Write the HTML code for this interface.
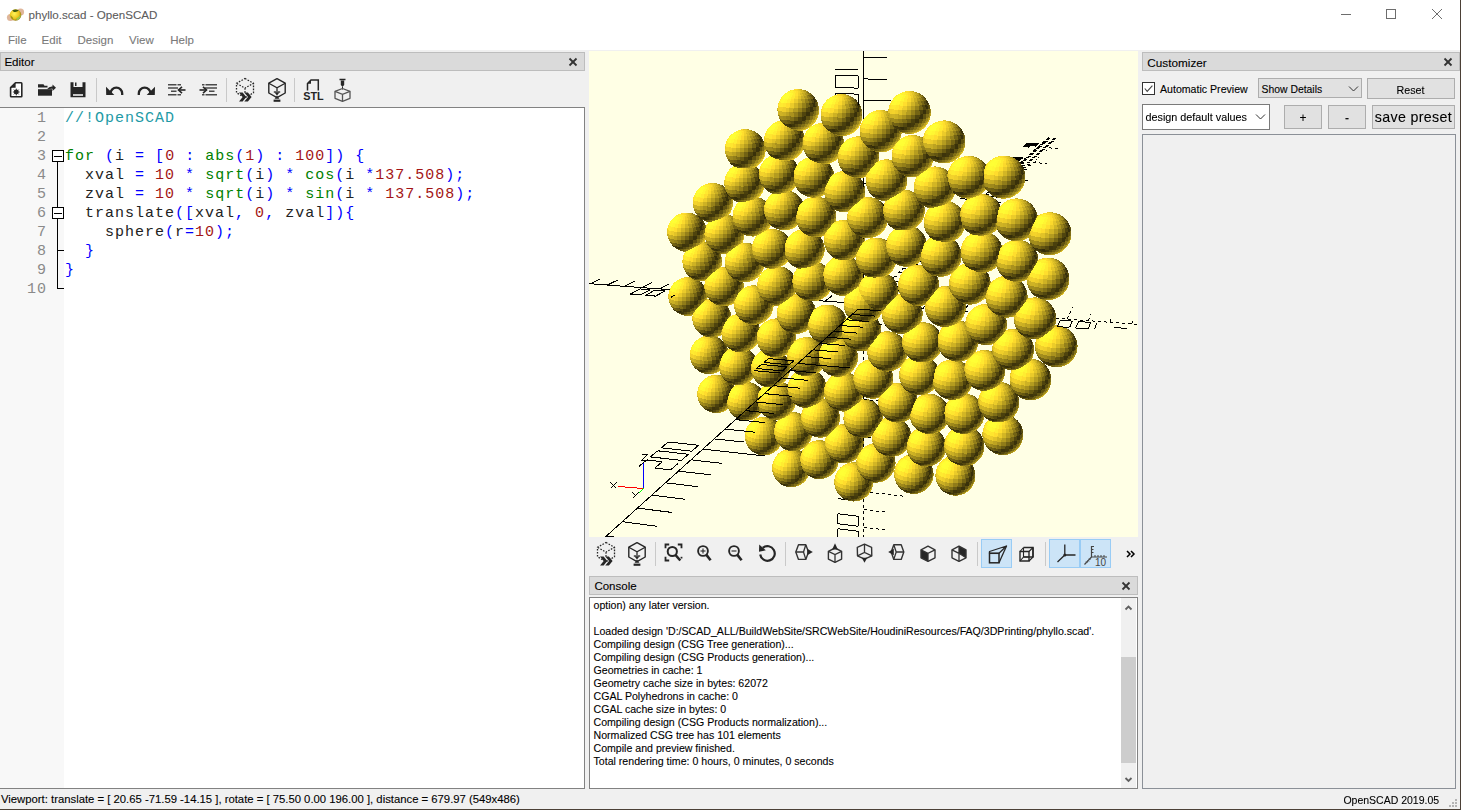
<!DOCTYPE html><html><head><meta charset="utf-8"><title>phyllo.scad - OpenSCAD</title><style>
*{margin:0;padding:0;box-sizing:border-box}
html,body{width:1461px;height:810px;overflow:hidden;background:#f0f0f0;font-family:"Liberation Sans",sans-serif}
.a{position:absolute}
.t{position:absolute;line-height:1;white-space:pre;-webkit-text-stroke:0.1px currentColor}
.m{font-family:"Liberation Mono",monospace}
svg{position:absolute;overflow:hidden}
</style></head><body>
<div class="a" style="left:0px;top:0px;width:1461px;height:50px;background:#fff;"></div>
<div class="t" style="left:28.5px;top:8.68px;font-size:11.6px;color:#5c5c5c;">phyllo.scad - OpenSCAD</div>
<svg style="left:5px;top:5px" width="22" height="20"><defs><radialGradient id="ig" cx=".4" cy=".4" r=".7"><stop offset="0" stop-color="#fff45a"/><stop offset=".6" stop-color="#e8c21a"/><stop offset="1" stop-color="#6b5a10"/></radialGradient></defs><circle cx="15.5" cy="7" r="3.6" fill="#d9a98a" opacity=".85"/><circle cx="5.5" cy="12.5" r="3.6" fill="#d9a98a" opacity=".85"/><circle cx="10.5" cy="10" r="5.8" fill="url(#ig)"/><path d="M7.2 5.6Q10.5 3.6 13.8 5.6Q11.5 7.6 9 6.9Z" fill="#3f5a12"/><path d="M12.2 15.2Q15.8 13.5 15.6 9.8Q13.6 12.8 11.2 13.6Z" fill="#9bc84a"/><path d="M5.2 10.2Q6.2 13.5 8.6 14.6L7.4 12.2Z" fill="#5e6a20" opacity=".8"/></svg>
<div class="t" style="left:8px;top:35.07px;font-size:11.5px;color:#7a7a7a;">File</div>
<div class="t" style="left:41.6px;top:35.07px;font-size:11.5px;color:#7a7a7a;">Edit</div>
<div class="t" style="left:77.5px;top:35.07px;font-size:11.5px;color:#7a7a7a;">Design</div>
<div class="t" style="left:129.1px;top:35.07px;font-size:11.5px;color:#7a7a7a;">View</div>
<div class="t" style="left:170.3px;top:35.07px;font-size:11.5px;color:#7a7a7a;">Help</div>
<svg style="left:1330px;top:0" width="131" height="30"><g stroke="#6d6d6d" stroke-width="1" fill="none"><line x1="11" y1="14.5" x2="21" y2="14.5"/><rect x="56.5" y="9.5" width="9" height="9"/><line x1="102" y1="9" x2="112" y2="19"/><line x1="112" y1="9" x2="102" y2="19"/></g></svg>
<div class="a" style="left:0px;top:52px;width:585px;height:19px;background:#dadada;border:1px solid #bdbdbd;"></div>
<div class="t" style="left:4.4px;top:56.92px;font-size:11.55px;color:#000;">Editor</div>
<svg style="left:568px;top:56.5px" width="10" height="10"><g stroke="#333" stroke-width="1.8"><line x1="1.5" y1="1.5" x2="8.5" y2="8.5"/><line x1="8.5" y1="1.5" x2="1.5" y2="8.5"/></g></svg>
<div class="a" style="left:589px;top:576px;width:549px;height:19px;background:#dadada;border:1px solid #bdbdbd;"></div>
<div class="t" style="left:594.4px;top:580.97px;font-size:11.5px;color:#000;">Console</div>
<svg style="left:1121px;top:580.5px" width="10" height="10"><g stroke="#333" stroke-width="1.8"><line x1="1.5" y1="1.5" x2="8.5" y2="8.5"/><line x1="8.5" y1="1.5" x2="1.5" y2="8.5"/></g></svg>
<div class="a" style="left:1142px;top:52px;width:318px;height:19px;background:#dadada;border:1px solid #bdbdbd;"></div>
<div class="t" style="left:1147.3px;top:56.75px;font-size:11.75px;color:#000;">Customizer</div>
<svg style="left:1443px;top:56.5px" width="10" height="10"><g stroke="#333" stroke-width="1.8"><line x1="1.5" y1="1.5" x2="8.5" y2="8.5"/><line x1="8.5" y1="1.5" x2="1.5" y2="8.5"/></g></svg>
<svg style="left:8px;top:80px" width="18" height="20" viewBox="0 0 18 20" ><path d="M7.5 2.8H13.2Q13.8 2.8 13.8 3.5V16.2Q13.8 16.8 13.2 16.8H3.2Q2.6 16.8 2.6 16.2V7.6Z" fill="#fff" stroke="#262626" stroke-width="1.6" stroke-linejoin="round"/><path d="M2.6 7.8L7.6 2.8V7.8Z" fill="#262626"/><circle cx="8.3" cy="12" r="2.4" fill="#262626"/><path d="M8.3 8.6V15.4M4.9 12H11.7M5.9 9.6L10.7 14.4M10.7 9.6L5.9 14.4" stroke="#262626" stroke-width="0.9"/></svg><svg style="left:36px;top:80px" width="22" height="18" viewBox="0 0 22 18" ><path d="M2 4.3H7.5L8.5 5.8H11.5V7.6H2Z" fill="#262626"/><path d="M2 9.2H16V15.7H2Z" fill="#262626"/><path d="M11 9.3Q13 6.3 16.5 6.6V4.5L20 7.8L16.5 11V8.8Q14 8.6 12.5 9.3Z" fill="#262626"/></svg><svg style="left:68px;top:80px" width="20" height="20" viewBox="0 0 20 20" ><path d="M2.5 2.3H5.5V7H14.5V2.3H17.5V17.3H2.5Z" fill="#262626"/><rect x="7" y="2.5" width="1.5" height="3.5" fill="#262626"/><rect x="5" y="14" width="10" height="2" fill="#c8c8c8"/></svg><div class="a" style="left:96px;top:78px;width:1px;height:24px;background:#c9c9c9"></div><div class="a" style="left:226px;top:78px;width:1px;height:24px;background:#c9c9c9"></div><div class="a" style="left:294px;top:78px;width:1px;height:24px;background:#c9c9c9"></div><svg style="left:104px;top:80px" width="22" height="18" viewBox="0 0 22 18" ><path d="M6.5 15V13.5A5.8 5.8 0 0 1 18.2 13.5V15" fill="none" stroke="#262626" stroke-width="2.3"/><path d="M2 6.8L2.2 15H10.3Z" fill="#262626"/></svg><svg style="left:135px;top:80px" width="22" height="18" viewBox="0 0 22 18" ><path d="M15.5 15V13.5A5.8 5.8 0 0 0 3.8 13.5V15" fill="none" stroke="#262626" stroke-width="2.3"/><path d="M20 6.8L19.8 15H11.7Z" fill="#262626"/></svg><svg style="left:166px;top:80px" width="22" height="18" viewBox="0 0 22 18" ><g stroke="#4a4a4a" stroke-width="1.6"><path d="M2 4.8H10.5M11.5 4.8H15M2 8H12M5 11.2H10.5M2 14.8H10.5M11.5 14.8H15"/></g><path d="M12.8 10H19.5" stroke="#262626" stroke-width="1.6"/><path d="M16 6.8L12.5 10L16 13.2" fill="none" stroke="#262626" stroke-width="1.6"/></svg><svg style="left:197px;top:80px" width="22" height="18" viewBox="0 0 22 18" ><g stroke="#4a4a4a" stroke-width="1.6"><path d="M5 4.8H7.5M8.5 4.8H20M8 8H20M12 11.2H17.5M5 14.8H7.5M8.5 14.8H20"/></g><path d="M2.5 10H9.2" stroke="#262626" stroke-width="1.6"/><path d="M6 6.8L9.5 10L6 13.2" fill="none" stroke="#262626" stroke-width="1.6"/></svg><svg style="left:233px;top:77px" width="24" height="26" viewBox="0 0 24 26" ><path d="M12 1.5L20.5 6.3V15.8L12 20.6L3.5 15.8V6.3Z" fill="none" stroke="#262626" stroke-width="1.3" stroke-dasharray="1.6 1.4"/><path d="M3.8 6.5L12 11.1L20.2 6.5M12 11.1V17" fill="none" stroke="#262626" stroke-width="1.2" stroke-dasharray="1.6 1.4"/><path d="M6 15.5H9.6L13.3 20L9.6 24.5H6L9.7 20Z M11.3 15.5H14.9L18.6 20L14.9 24.5H11.3L15 20Z" fill="#262626"/></svg><svg style="left:265px;top:77px" width="24" height="26" viewBox="0 0 24 26" ><path d="M12 1.6L20.2 6.2V16L12 20.6L3.8 16V6.2Z" fill="none" stroke="#262626" stroke-width="1.4" stroke-linejoin="round"/><path d="M3.8 6.2L12 10.8L20.2 6.2M12 10.8V14" fill="none" stroke="#262626" stroke-width="1.3"/><path d="M9.6 15.6H14.4L12 18.6Z M12 18.6L14.4 21.8H9.6Z" fill="#262626"/><rect x="8.6" y="22.6" width="6.8" height="2.2" fill="#262626"/><path d="M8.8 15H15.2" stroke="#262626" stroke-width="1.3"/></svg><svg style="left:301px;top:77px" width="24" height="24" viewBox="0 0 24 24" ><path d="M6.5 13.5V6.5L10 3H17.3V13.5" fill="none" stroke="#262626" stroke-width="1.5"/><path d="M6.5 6.8L10 3.3V6.8Z" fill="#262626"/><text x="12.5" y="22.7" font-family="Liberation Sans" font-weight="bold" font-size="10" text-anchor="middle" fill="#262626" textLength="20.5" lengthAdjust="spacingAndGlyphs">STL</text></svg><svg style="left:333px;top:77px" width="22" height="25" viewBox="0 0 22 25" ><path d="M6.5 2.5H12.5" stroke="#262626" stroke-width="1.5"/><path d="M7.8 3.5H11.2V8L9.5 9.8L7.8 8Z" fill="#262626"/><path d="M9.5 9.5V12.5" stroke="#262626" stroke-width="1"/><path d="M9.5 11.5L17 14.3V21.3L9.5 24.3L2 21.3V14.3Z" fill="none" stroke="#555" stroke-width="1.3" stroke-linejoin="round"/><path d="M2 14.3L9.5 17.3L17 14.3M9.5 17.3V24.3" fill="none" stroke="#555" stroke-width="1.3"/></svg>
<svg style="left:594px;top:541px" width="24" height="26" viewBox="0 0 24 26" ><path d="M12 1.5L20.5 6.3V15.8L12 20.6L3.5 15.8V6.3Z" fill="none" stroke="#262626" stroke-width="1.3" stroke-dasharray="1.6 1.4"/><path d="M3.8 6.5L12 11.1L20.2 6.5M12 11.1V17" fill="none" stroke="#262626" stroke-width="1.2" stroke-dasharray="1.6 1.4"/><path d="M6 15.5H9.6L13.3 20L9.6 24.5H6L9.7 20Z M11.3 15.5H14.9L18.6 20L14.9 24.5H11.3L15 20Z" fill="#262626"/></svg><svg style="left:625px;top:541px" width="24" height="26" viewBox="0 0 24 26" ><path d="M12 1.6L20.2 6.2V16L12 20.6L3.8 16V6.2Z" fill="none" stroke="#262626" stroke-width="1.4" stroke-linejoin="round"/><path d="M3.8 6.2L12 10.8L20.2 6.2M12 10.8V14" fill="none" stroke="#262626" stroke-width="1.3"/><path d="M9.6 15.6H14.4L12 18.6Z M12 18.6L14.4 21.8H9.6Z" fill="#262626"/><rect x="8.6" y="22.6" width="6.8" height="2.2" fill="#262626"/><path d="M8.8 15H15.2" stroke="#262626" stroke-width="1.3"/></svg><div class="a" style="left:655px;top:542px;width:1px;height:24px;background:#c9c9c9"></div><div class="a" style="left:785px;top:542px;width:1px;height:24px;background:#c9c9c9"></div><div class="a" style="left:977px;top:542px;width:1px;height:24px;background:#c9c9c9"></div><div class="a" style="left:1045px;top:542px;width:1px;height:24px;background:#c9c9c9"></div><svg style="left:662px;top:541px" width="24" height="24" viewBox="0 0 24 24" ><path d="M3.5 7.2V3.5H7.2M15.8 3.5H19.5V7.2M3.5 15.8V19.5H7.2" fill="none" stroke="#262626" stroke-width="1.8"/><circle cx="10.3" cy="10.5" r="4.6" fill="none" stroke="#262626" stroke-width="2"/><path d="M13.5 14L18.3 19.5" stroke="#262626" stroke-width="2.6"/><path d="M19.5 15.8V17.5" stroke="#262626" stroke-width="1.8"/></svg><svg style="left:694px;top:542px" width="20" height="22" viewBox="0 0 20 22" ><circle cx="9" cy="9" r="4.9" fill="none" stroke="#262626" stroke-width="1.9"/><path d="M12.2 12.6L16.6 18.2" stroke="#262626" stroke-width="2.6"/><path d="M6.5 9H11.5" stroke="#262626" stroke-width="1.1"/><path d="M9 6.5V11.5" stroke="#262626" stroke-width="1.1"/></svg><svg style="left:725px;top:542px" width="20" height="22" viewBox="0 0 20 22" ><circle cx="9" cy="9" r="4.9" fill="none" stroke="#262626" stroke-width="1.9"/><path d="M12.2 12.6L16.6 18.2" stroke="#262626" stroke-width="2.6"/><path d="M6.5 9H11.5" stroke="#262626" stroke-width="1.1"/></svg><svg style="left:756px;top:542px" width="22" height="22" viewBox="0 0 22 22" ><path d="M4.2 12.5A7.3 7.3 0 1 0 6.8 5.8" fill="none" stroke="#262626" stroke-width="2.2"/><path d="M3.2 2.5L3 9.8L9.8 8.3Z" fill="#262626"/></svg><svg style="left:792px;top:541px" width="24" height="22" viewBox="0 0 24 22" ><path d="M6.5 3.8H13.8L16.5 11L13.8 18.4H6.5L3.8 11Z" fill="none" stroke="#333" stroke-width="1.4" stroke-linejoin="round"/><path d="M3.8 11H11.5L13.8 3.8M11.5 11L13.8 18.4" fill="none" stroke="#333" stroke-width="1.3"/><path d="M15.2 7.8L20.8 11L15.2 14.2Z" fill="#262626"/></svg><svg style="left:825px;top:540px" width="20" height="24" viewBox="0 0 20 24" ><path d="M10 8L16.6 11.3V19.1L10 22.3L3.4 19.1V11.3Z" fill="none" stroke="#333" stroke-width="1.4" stroke-linejoin="round"/><path d="M3.4 11.3L10 14.6L16.6 11.3M10 14.6V22.3" fill="none" stroke="#333" stroke-width="1.3"/><path d="M7.2 9.6L10 3.2L12.8 9.6Z" fill="#262626"/></svg><svg style="left:855px;top:540px" width="20" height="24" viewBox="0 0 20 24" ><path d="M9.5 4.2L16.6 7.3L16.8 15.8L9.5 19.2L2.5 15.8L2.3 7.3Z" fill="none" stroke="#333" stroke-width="1.4" stroke-linejoin="round"/><path d="M2.5 15.8L9.5 12.5L16.8 15.8M9.5 4.2V12.5" fill="none" stroke="#333" stroke-width="1.3"/><path d="M6.8 17.8L9.5 22.8L12.2 17.8Z" fill="#262626"/></svg><svg style="left:886px;top:541px" width="24" height="22" viewBox="0 0 24 22" ><path d="M7.8 3.8H15.2L17.8 11L15.2 18.4H7.8L5.2 11Z" fill="none" stroke="#333" stroke-width="1.4" stroke-linejoin="round"/><path d="M17.8 11H10.2L7.8 3.8M10.2 11L7.8 18.4" fill="none" stroke="#333" stroke-width="1.3"/><path d="M7.8 7.8L2.2 11L7.8 14.2Z" fill="#262626"/></svg><svg style="left:918px;top:543px" width="20" height="21" viewBox="0 0 20 21" ><path d="M3 6.8L10 10.3V18.3L3 14.8Z" fill="#262626"/><path d="M10 3.2L17 6.8V14.8L10 18.3L3 14.8V6.8Z" fill="none" stroke="#333" stroke-width="1.4" stroke-linejoin="round"/><path d="M3 6.8L10 10.3L17 6.8M10 10.3V18.3" fill="none" stroke="#333" stroke-width="1.3"/></svg><svg style="left:949px;top:543px" width="20" height="21" viewBox="0 0 20 21" ><path d="M10 3.2L17 6.8V14.8L10 10.3Z" fill="#262626"/><path d="M10 3.2L17 6.8V14.8L10 18.3L3 14.8V6.8Z" fill="none" stroke="#333" stroke-width="1.4" stroke-linejoin="round"/><path d="M3 6.8L10 10.3M10 3.2V18.3M10 10.3L17 14.8" fill="none" stroke="#333" stroke-width="1.3"/></svg><div class="a" style="left:981px;top:539px;width:31px;height:29px;background:#cce4f7;border:1px solid #99ccf5"></div><div class="a" style="left:1049px;top:539px;width:31px;height:29px;background:#cce4f7;border:1px solid #99ccf5"></div><div class="a" style="left:1080px;top:539px;width:31px;height:29px;background:#cce4f7;border:1px solid #99ccf5"></div><svg style="left:985px;top:542px" width="24" height="24" viewBox="0 0 24 24" ><path d="M4.5 11.3H14L21.5 4L4.5 9.5Z" fill="none" stroke="#262626" stroke-width="1.3" stroke-linejoin="round"/><rect x="4.5" y="11.3" width="9.5" height="9.5" fill="none" stroke="#262626" stroke-width="1.5"/><path d="M14 20.8L21.5 4" stroke="#262626" stroke-width="1.3"/></svg><svg style="left:1017px;top:544px" width="20" height="20" viewBox="0 0 20 20" ><path d="M3 7.5H12V17H3Z M6.5 3.5H16V13H6.5" fill="none" stroke="#262626" stroke-width="1.4"/><path d="M3 7.5L6.5 3.5M12 7.5L16 3.5M12 17L16 13M3 17L6.5 13V3.5M6.5 13H12" fill="none" stroke="#262626" stroke-width="1.1"/><path d="M16 3.5V13" stroke="#262626" stroke-width="1.4"/></svg><svg style="left:1052px;top:542px" width="26" height="22" viewBox="0 0 26 22" ><path d="M12.8 2.5V13M12.8 13H23.5M12.8 13L5.5 20" fill="none" stroke="#262626" stroke-width="1.3"/><circle cx="12.8" cy="13" r="1.5" fill="#262626"/></svg><svg style="left:1082px;top:542px" width="28" height="26" viewBox="0 0 28 26" ><path d="M9.5 4V15H25M9.5 15L2.5 22.5" fill="none" stroke="#444" stroke-width="1.2"/><path d="M9.5 4.5H12M9.5 7.5H11.5M9.5 10.5H11.5M13 15V13M16 15V13M19 15V13M22 15V13" stroke="#444" stroke-width="1"/><path d="M4 19.5L5.5 21M5.5 18L7 19.5M7 16.5L8.5 18" stroke="#555" stroke-width="0.9"/><text x="18.5" y="24.2" font-family="Liberation Sans" font-size="10" text-anchor="middle" fill="#444">10</text></svg><svg style="left:1124px;top:548px" width="14" height="12" viewBox="0 0 14 12" ><path d="M3 3L6 6L3 9M7 3L10 6L7 9" fill="none" stroke="#000" stroke-width="1.5"/></svg>
<div class="a" style="left:0px;top:107px;width:585px;height:682px;background:#fff;border:1px solid #828282;border-left:none"></div>
<div class="a" style="left:0px;top:108px;width:64px;height:680px;background:#f8f8f8;"></div>
<div class="t" style="left:37px;top:110.80px;font-size:15px;color:#8a8a8a;letter-spacing:1.0px;font-family:'Liberation Mono',monospace;-webkit-text-stroke:0;">1</div>
<div class="t" style="left:65px;top:110.80px;font-size:15px;color:#000;letter-spacing:1.0px;font-family:'Liberation Mono',monospace;-webkit-text-stroke:0;"><span style="color:#1e9aa6">//!OpenSCAD</span></div>
<div class="t" style="left:37px;top:129.80px;font-size:15px;color:#8a8a8a;letter-spacing:1.0px;font-family:'Liberation Mono',monospace;-webkit-text-stroke:0;">2</div>
<div class="t" style="left:37px;top:148.80px;font-size:15px;color:#8a8a8a;letter-spacing:1.0px;font-family:'Liberation Mono',monospace;-webkit-text-stroke:0;">3</div>
<div class="t" style="left:65px;top:148.80px;font-size:15px;color:#000;letter-spacing:1.0px;font-family:'Liberation Mono',monospace;-webkit-text-stroke:0;"><span style="color:#008000">for</span><span style="color:#000"> </span><span style="color:#0000ff">(</span><span style="color:#222">i</span><span style="color:#000"> </span><span style="color:#0000ff">=</span><span style="color:#000"> </span><span style="color:#0000ff">[</span><span style="color:#a31515">0</span><span style="color:#000"> </span><span style="color:#0000ff">:</span><span style="color:#000"> </span><span style="color:#008000">abs</span><span style="color:#0000ff">(</span><span style="color:#a31515">1</span><span style="color:#0000ff">)</span><span style="color:#000"> </span><span style="color:#0000ff">:</span><span style="color:#000"> </span><span style="color:#a31515">100</span><span style="color:#0000ff">]</span><span style="color:#0000ff">)</span><span style="color:#000"> </span><span style="color:#0000ff">{</span></div>
<div class="t" style="left:37px;top:167.80px;font-size:15px;color:#8a8a8a;letter-spacing:1.0px;font-family:'Liberation Mono',monospace;-webkit-text-stroke:0;">4</div>
<div class="t" style="left:65px;top:167.80px;font-size:15px;color:#000;letter-spacing:1.0px;font-family:'Liberation Mono',monospace;-webkit-text-stroke:0;"><span style="color:#222">  xval</span><span style="color:#000"> </span><span style="color:#0000ff">=</span><span style="color:#000"> </span><span style="color:#a31515">10</span><span style="color:#000"> </span><span style="color:#0000ff">*</span><span style="color:#000"> </span><span style="color:#008000">sqrt</span><span style="color:#0000ff">(</span><span style="color:#222">i</span><span style="color:#0000ff">)</span><span style="color:#000"> </span><span style="color:#0000ff">*</span><span style="color:#000"> </span><span style="color:#008000">cos</span><span style="color:#0000ff">(</span><span style="color:#222">i</span><span style="color:#000"> </span><span style="color:#0000ff">*</span><span style="color:#a31515">137.508</span><span style="color:#0000ff">)</span><span style="color:#0000ff">;</span></div>
<div class="t" style="left:37px;top:186.80px;font-size:15px;color:#8a8a8a;letter-spacing:1.0px;font-family:'Liberation Mono',monospace;-webkit-text-stroke:0;">5</div>
<div class="t" style="left:65px;top:186.80px;font-size:15px;color:#000;letter-spacing:1.0px;font-family:'Liberation Mono',monospace;-webkit-text-stroke:0;"><span style="color:#222">  zval</span><span style="color:#000"> </span><span style="color:#0000ff">=</span><span style="color:#000"> </span><span style="color:#a31515">10</span><span style="color:#000"> </span><span style="color:#0000ff">*</span><span style="color:#000"> </span><span style="color:#008000">sqrt</span><span style="color:#0000ff">(</span><span style="color:#222">i</span><span style="color:#0000ff">)</span><span style="color:#000"> </span><span style="color:#0000ff">*</span><span style="color:#000"> </span><span style="color:#008000">sin</span><span style="color:#0000ff">(</span><span style="color:#222">i</span><span style="color:#000"> </span><span style="color:#0000ff">*</span><span style="color:#000"> </span><span style="color:#a31515">137.508</span><span style="color:#0000ff">)</span><span style="color:#0000ff">;</span></div>
<div class="t" style="left:37px;top:205.80px;font-size:15px;color:#8a8a8a;letter-spacing:1.0px;font-family:'Liberation Mono',monospace;-webkit-text-stroke:0;">6</div>
<div class="t" style="left:65px;top:205.80px;font-size:15px;color:#000;letter-spacing:1.0px;font-family:'Liberation Mono',monospace;-webkit-text-stroke:0;"><span style="color:#222">  translate</span><span style="color:#0000ff">(</span><span style="color:#0000ff">[</span><span style="color:#222">xval</span><span style="color:#0000ff">,</span><span style="color:#000"> </span><span style="color:#a31515">0</span><span style="color:#0000ff">,</span><span style="color:#000"> </span><span style="color:#222">zval</span><span style="color:#0000ff">]</span><span style="color:#0000ff">)</span><span style="color:#0000ff">{</span></div>
<div class="t" style="left:37px;top:224.80px;font-size:15px;color:#8a8a8a;letter-spacing:1.0px;font-family:'Liberation Mono',monospace;-webkit-text-stroke:0;">7</div>
<div class="t" style="left:65px;top:224.80px;font-size:15px;color:#000;letter-spacing:1.0px;font-family:'Liberation Mono',monospace;-webkit-text-stroke:0;"><span style="color:#222">    sphere</span><span style="color:#0000ff">(</span><span style="color:#222">r</span><span style="color:#0000ff">=</span><span style="color:#a31515">10</span><span style="color:#0000ff">)</span><span style="color:#0000ff">;</span></div>
<div class="t" style="left:37px;top:243.80px;font-size:15px;color:#8a8a8a;letter-spacing:1.0px;font-family:'Liberation Mono',monospace;-webkit-text-stroke:0;">8</div>
<div class="t" style="left:65px;top:243.80px;font-size:15px;color:#000;letter-spacing:1.0px;font-family:'Liberation Mono',monospace;-webkit-text-stroke:0;"><span style="color:#0000ff">  }</span></div>
<div class="t" style="left:37px;top:262.80px;font-size:15px;color:#8a8a8a;letter-spacing:1.0px;font-family:'Liberation Mono',monospace;-webkit-text-stroke:0;">9</div>
<div class="t" style="left:65px;top:262.80px;font-size:15px;color:#000;letter-spacing:1.0px;font-family:'Liberation Mono',monospace;-webkit-text-stroke:0;"><span style="color:#0000ff">}</span></div>
<div class="t" style="left:27px;top:281.80px;font-size:15px;color:#8a8a8a;letter-spacing:1.0px;font-family:'Liberation Mono',monospace;-webkit-text-stroke:0;">10</div>
<svg style="left:50px;top:140px" width="16" height="160"><g stroke="#000" stroke-width="1" fill="none" shape-rendering="crispEdges"><line x1="7.5" y1="22" x2="7.5" y2="149"/><line x1="7.5" y1="110.5" x2="14" y2="110.5"/><line x1="7.5" y1="148.5" x2="14" y2="148.5"/><rect x="2.5" y="10.5" width="11" height="11" fill="#fff"/><line x1="4" y1="16" x2="12" y2="16"/><rect x="2.5" y="67.5" width="11" height="11" fill="#fff"/><line x1="4" y1="73" x2="12" y2="73"/></g></svg>
<svg style="left:589px;top:51px" width="549" height="486"><defs><radialGradient id="sg" cx="0.225" cy="0.225" r="0.9" fx="0.15" fy="0.15"><stop offset="0.025" stop-color="#fff532"/><stop offset="0.125" stop-color="#fffb33"/><stop offset="0.225" stop-color="#fff131"/><stop offset="0.325" stop-color="#fdde2d"/><stop offset="0.425" stop-color="#e2c328"/><stop offset="0.525" stop-color="#bba221"/><stop offset="0.625" stop-color="#8d7919"/><stop offset="0.725" stop-color="#564a0f"/><stop offset="0.775" stop-color="#3b330b"/><stop offset="0.825" stop-color="#4f440e"/><stop offset="0.925" stop-color="#a18b1c"/><stop offset="0.975" stop-color="#cfb325"/><stop offset="1" stop-color="#dcbf28"/></radialGradient></defs><rect width="549" height="486" fill="#ffffe5"/><g fill="url(#sg)"><circle cx="127.5" cy="342.8" r="19.1"/><circle cx="202.3" cy="416.8" r="19.2"/><circle cx="175.1" cy="385.1" r="19.2"/><circle cx="157.3" cy="350.3" r="19.2"/><circle cx="120.2" cy="303.8" r="19.2"/><circle cx="204.4" cy="380.7" r="19.3"/><circle cx="230.5" cy="408.6" r="19.3"/><circle cx="149.5" cy="315.0" r="19.3"/><circle cx="187.7" cy="349.3" r="19.4"/><circle cx="99.0" cy="245.5" r="19.4"/><circle cx="264.7" cy="430.8" r="19.4"/><circle cx="123.0" cy="267.2" r="19.4"/><circle cx="181.6" cy="317.2" r="19.5"/><circle cx="152.0" cy="281.9" r="19.5"/><circle cx="231.5" cy="367.1" r="19.5"/><circle cx="255.1" cy="392.6" r="19.5"/><circle cx="218.1" cy="337.4" r="19.6"/><circle cx="286.9" cy="411.8" r="19.6"/><circle cx="113.2" cy="210.7" r="19.6"/><circle cx="135.1" cy="235.5" r="19.6"/><circle cx="187.3" cy="287.1" r="19.6"/><circle cx="98.0" cy="181.3" r="19.7"/><circle cx="164.8" cy="254.0" r="19.7"/><circle cx="217.7" cy="305.8" r="19.7"/><circle cx="274.2" cy="367.3" r="19.7"/><circle cx="324.8" cy="423.0" r="19.7"/><circle cx="254.7" cy="340.8" r="19.7"/><circle cx="302.7" cy="385.9" r="19.8"/><circle cx="155.7" cy="211.4" r="19.8"/><circle cx="135.5" cy="183.3" r="19.8"/><circle cx="207.6" cy="262.9" r="19.8"/><circle cx="249.1" cy="306.1" r="19.9"/><circle cx="188.0" cy="234.9" r="19.9"/><circle cx="123.9" cy="151.9" r="19.9"/><circle cx="337.2" cy="395.5" r="19.9"/><circle cx="366.4" cy="424.4" r="19.9"/><circle cx="284.3" cy="327.7" r="19.9"/><circle cx="238.6" cy="273.5" r="20.0"/><circle cx="309.1" cy="351.6" r="20.0"/><circle cx="183.1" cy="197.8" r="20.0"/><circle cx="163.7" cy="165.5" r="20.0"/><circle cx="223.5" cy="230.4" r="20.1"/><circle cx="340.5" cy="363.0" r="20.1"/><circle cx="272.3" cy="280.2" r="20.1"/><circle cx="375.2" cy="394.9" r="20.1"/><circle cx="298.3" cy="300.4" r="20.1"/><circle cx="155.5" cy="132.2" r="20.2"/><circle cx="215.5" cy="198.4" r="20.2"/><circle cx="330.3" cy="324.1" r="20.2"/><circle cx="274.7" cy="253.0" r="20.2"/><circle cx="195.3" cy="159.1" r="20.2"/><circle cx="254.2" cy="224.6" r="20.2"/><circle cx="375.1" cy="362.8" r="20.2"/><circle cx="156.3" cy="98.6" r="20.3"/><circle cx="363.5" cy="328.7" r="20.3"/><circle cx="333.3" cy="291.5" r="20.3"/><circle cx="289.2" cy="240.8" r="20.3"/><circle cx="413.8" cy="383.5" r="20.3"/><circle cx="227.1" cy="165.9" r="20.4"/><circle cx="190.3" cy="123.4" r="20.4"/><circle cx="313.3" cy="262.7" r="20.4"/><circle cx="255.3" cy="189.2" r="20.4"/><circle cx="409.7" cy="351.2" r="20.5"/><circle cx="287.3" cy="207.2" r="20.5"/><circle cx="224.9" cy="126.2" r="20.5"/><circle cx="368.7" cy="290.1" r="20.5"/><circle cx="395.6" cy="319.6" r="20.5"/><circle cx="195.5" cy="89.9" r="20.5"/><circle cx="329.6" cy="234.3" r="20.6"/><circle cx="255.8" cy="140.6" r="20.6"/><circle cx="356.3" cy="255.7" r="20.6"/><circle cx="278.7" cy="166.6" r="20.6"/><circle cx="317.5" cy="195.1" r="20.7"/><circle cx="234.3" cy="92.7" r="20.7"/><circle cx="441.4" cy="328.4" r="20.7"/><circle cx="209.2" cy="59.1" r="20.7"/><circle cx="397.0" cy="273.5" r="20.7"/><circle cx="424.1" cy="298.7" r="20.8"/><circle cx="351.7" cy="204.9" r="20.8"/><circle cx="314.9" cy="159.6" r="20.8"/><circle cx="269.5" cy="106.3" r="20.8"/><circle cx="380.8" cy="232.8" r="20.8"/><circle cx="297.5" cy="129.3" r="20.9"/><circle cx="252.5" cy="64.2" r="20.9"/><circle cx="417.5" cy="245.7" r="21.0"/><circle cx="355.7" cy="171.1" r="21.0"/><circle cx="467.2" cy="295.3" r="21.0"/><circle cx="446.0" cy="267.4" r="21.0"/><circle cx="392.6" cy="201.0" r="21.0"/><circle cx="291.7" cy="80.2" r="21.0"/><circle cx="345.7" cy="136.7" r="21.1"/><circle cx="323.6" cy="105.3" r="21.1"/><circle cx="428.1" cy="209.8" r="21.2"/><circle cx="392.2" cy="164.2" r="21.2"/><circle cx="458.9" cy="227.9" r="21.2"/><circle cx="320.4" cy="61.5" r="21.3"/><circle cx="379.5" cy="126.3" r="21.3"/><circle cx="355.0" cy="91.0" r="21.3"/><circle cx="427.5" cy="168.8" r="21.3"/><circle cx="460.7" cy="182.7" r="21.4"/><circle cx="414.8" cy="126.2" r="21.5"/></g></svg>
<canvas id="vpc" width="549" height="486" style="position:absolute;left:589px;top:51px;width:549px;height:486px"></canvas>
<svg style="left:589px;top:51px" width="549" height="486"><g fill="none" stroke="#000" stroke-width="1" shape-rendering="crispEdges"><path d="M254.8 251.5L230.2 249.7M80.9 238.7L-4.9 232.3M269.0 258.2L10.8 491.0M274.7 226.7L274.7 223.0M274.7 187.7L274.7 187.0M274.7 135.7L274.7 127.0M274.7 68.0L274.7 -4.7M269.1 258.1L291.5 259.8M236.2 250.2L243.0 244.7M263.2 263.4L286.0 265.1M257.2 268.8L280.3 270.6M251.0 274.4L274.5 276.3M297.3 174.8L297.3 174.8M244.6 280.2L268.4 282.1M294.3 154.3L295.0 154.3M237.9 286.2L262.1 288.2M274.7 132.8L276.7 132.9M231.0 292.4L255.6 294.5M223.9 298.8L248.9 301.0M216.6 305.5L241.9 307.7M208.9 312.4L260.8 317.0M274.7 49.3L301.8 50.0M70.9 237.9L80.1 232.8M201.0 319.5L227.2 321.9M274.7 27.9L297.9 28.5M53.3 236.6L62.8 231.6M192.8 326.9L219.4 329.4M274.7 6.4L298.0 6.8M35.8 235.3L45.6 230.3M184.2 334.6L211.4 337.2M18.5 234.0L28.5 229.1M175.3 342.6L203.0 345.3M1.3 232.8L11.6 227.8M166.1 350.9L194.2 353.7M156.5 359.6L185.1 362.5M146.5 368.6L175.7 371.6M136.1 378.0L165.8 381.2M125.2 387.9L155.5 391.1M113.8 398.1L176.0 405.0M101.9 408.8L133.4 412.4M89.4 420.1L121.6 423.8M76.4 431.8L109.2 435.7M62.7 444.1L96.2 448.3M48.4 457.1L82.6 461.4M33.3 470.7L68.3 475.3M17.4 485.0L53.2 489.9"/><path d="M82.1 246.3L86.2 243.9M56.5 244.3L66.7 245.1M66.7 245.1L71.5 242.4M71.5 242.4L76.2 239.8M66.1 239.0L76.2 239.8M66.1 239.0L61.3 241.7M61.3 241.7L56.5 244.3M41.2 243.2L51.4 244.0M51.4 244.0L56.3 241.3M56.3 241.3L61.1 238.7M51.1 237.9L61.1 238.7M51.1 237.9L46.2 240.5M46.2 240.5L41.2 243.2M537.8 277.5L525.2 276.5M507.8 271.9L506.6 275.1M506.6 275.1L505.4 278.4M501.7 271.5L489.5 270.5M489.5 270.5L488.1 273.7M488.1 273.7L486.7 277.0M499.1 277.9L486.7 277.0M499.1 277.9L500.4 274.7M500.4 274.7L501.7 271.5M483.4 270.1L471.3 269.2M471.3 269.2L469.8 272.4M469.8 272.4L468.2 275.6M480.5 276.5L468.2 275.6M480.5 276.5L482.0 273.3M482.0 273.3L483.4 270.1M165.0 319.6L178.0 320.8M178.0 320.8L191.0 322.0M167.5 317.5L172.3 313.5M172.3 313.5L185.1 314.6M185.1 314.6L198.0 315.8M193.4 319.9L198.0 315.8M193.4 319.9L180.4 318.7M180.4 318.7L167.5 317.5M174.7 311.5L179.4 307.6M179.4 307.6L192.0 308.7M192.0 308.7L204.7 309.8M200.3 313.8L204.7 309.8M200.3 313.8L187.5 312.6M187.5 312.6L174.7 311.5M246.0 18.4L257.5 18.6M257.5 18.6L269.0 18.9M246.1 24.4L246.1 36.5M246.1 36.5L257.5 36.8M257.5 36.8L269.0 37.1M269.0 24.9L269.0 37.1M269.0 24.9L257.5 24.7M257.5 24.7L246.1 24.4M246.2 42.5L246.2 43.9M269.0 43.1L269.0 53.8M269.0 43.1L257.6 42.8M257.6 42.8L246.2 42.5M269.5 450.1L268.8 450.0M255.9 448.5L248.5 447.6M269.5 475.3L269.5 465.3M269.5 465.3L259.0 464.0M259.0 464.0L248.6 462.7M248.7 472.7L248.6 462.7M248.7 472.7L259.0 474.0M259.0 474.0L269.5 475.3M269.5 490.3L269.5 480.3M269.5 480.3L259.1 479.0M259.1 479.0L248.7 477.7M248.7 487.7L248.7 477.7M248.7 487.7L259.1 489.0M259.1 489.0L269.5 490.3M50.2 415.2L57.7 408.9M57.7 408.9L73.3 410.7M65.9 417.1L73.3 410.7M81.7 418.9L65.9 417.1M81.7 418.9L88.9 412.5M61.4 405.9L68.7 399.8M68.7 399.8L84.0 401.5M84.0 401.5L99.4 403.3M92.4 409.4L99.4 403.3M92.4 409.4L76.9 407.6M76.9 407.6L61.4 405.9M72.3 396.8L79.3 391.0M79.3 391.0L94.3 392.6M94.3 392.6L109.5 394.3M102.8 400.2L109.5 394.3M102.8 400.2L87.5 398.5M87.5 398.5L72.3 396.8M376.9 149.9L376.9 149.9M377.9 148.1L371.3 147.8M372.1 147.1L371.3 147.8M430.8 109.3L430.1 110.0M429.2 109.2L430.8 109.3M432.3 108.0L431.3 108.8M431.3 108.8L427.0 108.7M426.0 107.7L426.0 107.7M426.0 107.7L432.3 108.0M433.8 106.7L432.8 107.5M432.8 107.5L426.5 107.3M426.5 107.3L426.2 107.3M424.1 106.3L427.5 106.4M427.5 106.4L433.8 106.7M439.9 95.8L439.0 96.5M447.1 94.8L446.3 95.6M441.3 94.6L447.1 94.8M441.3 94.6L440.4 95.4M435.4 94.4L441.3 94.6M435.4 94.4L434.5 95.2M440.4 95.4L434.5 95.2M448.4 93.7L447.6 94.5M447.6 94.5L441.7 94.3M441.7 94.3L435.8 94.0M436.7 93.3L435.8 94.0M436.7 93.3L442.6 93.5M442.6 93.5L448.4 93.7M449.7 92.6L448.8 93.4M448.8 93.4L443.0 93.1M443.0 93.1L437.2 92.9M438.0 92.2L437.2 92.9M438.0 92.2L443.8 92.4M443.8 92.4L449.7 92.6"/><path d="M332.2 257.3L335.9 257.6M376.1 260.5L380.8 260.9M467.2 267.3L554.0 273.7M304.2 226.5L315.6 216.2M396.8 143.0L398.8 141.2M431.2 112.0L459.7 86.3M274.7 300.0L274.7 310.7M274.7 345.0L274.7 348.7M274.7 387.0L274.7 396.7M274.7 448.0L274.7 490.7M290.1 273.7L296.8 274.2M333.8 257.4L335.9 255.1M309.2 239.9L309.9 240.0M274.7 310.9L274.7 310.9M308.2 235.0L308.6 235.0M377.0 256.7L378.7 254.5M307.3 230.2L308.9 230.3M274.7 348.7L288.7 350.0M305.3 225.4L310.7 225.8M309.9 221.3L312.9 221.5M279.1 386.3L282.8 386.7M314.4 217.3L317.8 217.5M327.2 213.9L328.9 214.0M478.1 268.1L483.6 256.1M331.3 210.0L332.0 210.1M281.1 441.3L317.4 445.5M499.4 269.7L501.9 263.5M274.7 458.5L295.9 461.0M521.0 271.3L523.1 265.0M274.7 476.3L295.8 478.9M542.8 272.9L544.5 266.6M374.0 180.2L374.0 180.2M409.1 151.0L414.8 151.3M402.2 145.8L404.9 145.9M406.6 146.0L408.0 146.1M397.2 143.2L401.9 143.4M399.3 141.0L399.7 141.0M436.1 129.8L440.9 130.0M436.2 120.2L436.2 120.2M435.0 118.3L438.0 118.4M434.0 116.5L439.8 116.7M433.1 114.7L441.6 115.0M432.3 112.9L443.3 113.4M432.0 111.2L458.0 112.3M433.8 109.6L446.6 110.1M435.5 108.1L448.2 108.6M437.2 106.5L449.8 107.0M438.9 105.0L451.4 105.5M440.6 103.5L453.0 104.0M442.2 102.1L454.5 102.6M443.8 100.6L456.0 101.1M445.3 99.2L457.5 99.7M446.9 97.8L458.9 98.3M448.4 96.5L472.3 97.4M449.9 95.1L461.7 95.6M451.4 93.8L463.1 94.2M452.8 92.5L464.5 92.9M454.2 91.2L465.8 91.6M455.6 90.0L467.1 90.4M457.0 88.7L468.4 89.1M458.4 87.5L469.7 87.9" stroke-dasharray="3 3"/></g></svg>
<div class="a" style="left:589px;top:597px;width:549px;height:192px;background:#fff;border:1px solid #828282;"></div>
<div class="a" style="left:1121px;top:598px;width:15px;height:190px;background:#f0f0f0;"></div>
<div class="a" style="left:1121px;top:657px;width:15px;height:106px;background:#cdcdcd;"></div>
<svg style="left:1121px;top:598px" width="15" height="190"><g stroke="#606060" stroke-width="1.8" fill="none"><polyline points="4.5,11.5 7.5,8.5 10.5,11.5"/><polyline points="4.5,180 7.5,183 10.5,180"/></g></svg>
<div class="t" style="left:593.5px;top:599.73px;font-size:10.6px;color:#000;">option) any later version.</div>
<div class="t" style="left:593.5px;top:625.73px;font-size:10.6px;color:#000;">Loaded design &#39;D:/SCAD_ALL/BuildWebSite/SRCWebSite/HoudiniResources/FAQ/3DPrinting/phyllo.scad&#39;.</div>
<div class="t" style="left:593.5px;top:638.73px;font-size:10.6px;color:#000;">Compiling design (CSG Tree generation)...</div>
<div class="t" style="left:593.5px;top:651.73px;font-size:10.6px;color:#000;">Compiling design (CSG Products generation)...</div>
<div class="t" style="left:593.5px;top:664.73px;font-size:10.6px;color:#000;">Geometries in cache: 1</div>
<div class="t" style="left:593.5px;top:677.73px;font-size:10.6px;color:#000;">Geometry cache size in bytes: 62072</div>
<div class="t" style="left:593.5px;top:690.73px;font-size:10.6px;color:#000;">CGAL Polyhedrons in cache: 0</div>
<div class="t" style="left:593.5px;top:703.73px;font-size:10.6px;color:#000;">CGAL cache size in bytes: 0</div>
<div class="t" style="left:593.5px;top:716.73px;font-size:10.6px;color:#000;">Compiling design (CSG Products normalization)...</div>
<div class="t" style="left:593.5px;top:729.73px;font-size:10.6px;color:#000;">Normalized CSG tree has 101 elements</div>
<div class="t" style="left:593.5px;top:742.73px;font-size:10.6px;color:#000;">Compile and preview finished.</div>
<div class="t" style="left:593.5px;top:755.73px;font-size:10.6px;color:#000;">Total rendering time: 0 hours, 0 minutes, 0 seconds</div>
<div class="a" style="left:1142px;top:82px;width:13px;height:13px;background:#fff;border:1px solid #333;"></div>
<svg style="left:1142px;top:82px" width="13" height="13"><polyline points="2.8,6.5 5.2,9.3 10.4,3.6" fill="none" stroke="#444" stroke-width="1.1"/></svg>
<div class="t" style="left:1160px;top:84.43px;font-size:10.6px;color:#000;">Automatic Preview</div>
<div class="a" style="left:1258px;top:78px;width:104px;height:20px;background:#e1e1e1;border:1px solid #adadad;"></div>
<div class="t" style="left:1261.5px;top:84.80px;font-size:10.4px;color:#000;">Show Details</div>
<svg style="left:1348px;top:85px" width="12" height="8"><polyline points="1,1.5 5.5,6 10,1.5" fill="none" stroke="#333" stroke-width="1"/></svg>
<div class="a" style="left:1367px;top:78px;width:88px;height:21px;background:#e1e1e1;border:1px solid #adadad;"></div>
<div class="t" style="left:1396.5px;top:84.54px;font-size:10.7px;color:#000;">Reset</div>
<div class="a" style="left:1142px;top:104px;width:128px;height:26px;background:#fff;border:1px solid #7a7a7a;"></div>
<div class="t" style="left:1145.5px;top:112.36px;font-size:10.8px;color:#000;">design default values</div>
<svg style="left:1255px;top:113px" width="12" height="8"><polyline points="1,1.5 5.5,6 10,1.5" fill="none" stroke="#333" stroke-width="1"/></svg>
<div class="a" style="left:1284px;top:105px;width:38px;height:24px;background:#e1e1e1;border:1px solid #adadad;"></div>
<div class="t" style="left:1299.5px;top:111.84px;font-size:12px;color:#000;">+</div>
<div class="a" style="left:1328px;top:105px;width:38px;height:24px;background:#e1e1e1;border:1px solid #adadad;"></div>
<div class="t" style="left:1345px;top:111.84px;font-size:12px;color:#000;">-</div>
<div class="a" style="left:1372px;top:105px;width:83px;height:24px;background:#e1e1e1;border:1px solid #adadad;"></div>
<div class="t" style="left:1374.8px;top:110.48px;font-size:14.2px;color:#000;letter-spacing:0.35px;">save preset</div>
<div class="a" style="left:1142px;top:134px;width:314px;height:655px;background:#f0f0f0;border:1px solid #8b9097;"></div>
<div class="t" style="left:1px;top:794.03px;font-size:11.3px;color:#000;">Viewport: translate = [ 20.65 -71.59 -14.15 ], rotate = [ 75.50 0.00 196.00 ], distance = 679.97 (549x486)</div>
<div class="t" style="left:1343.4px;top:794.71px;font-size:10.5px;color:#000;">OpenSCAD 2019.05</div>
<svg style="left:1448px;top:798px" width="10" height="10" shape-rendering="crispEdges"><g fill="#b4b4b4"><rect x="7" y="1" width="2" height="2"/><rect x="4" y="4" width="2" height="2"/><rect x="7" y="4" width="2" height="2"/><rect x="1" y="7" width="2" height="2"/><rect x="4" y="7" width="2" height="2"/><rect x="7" y="7" width="2" height="2"/></g></svg>
<div class="a" style="left:1460px;top:0px;width:1px;height:810px;background:#4b4036;"></div>
<div class="a" style="left:0px;top:809px;width:1461px;height:1px;background:#4b4036;"></div>
<svg style="left:0;top:0" width="1461" height="810" shape-rendering="crispEdges"><g fill="none" stroke-width="1"><path d="M618.5 486.5L643.5 488.5" stroke="#f00"/><path d="M643.5 488.5L643.5 462.5" stroke="#00f"/><path d="M643.5 488.5L638.5 493.5" stroke="#0f0"/><path d="M610.5 482.5L616.5 488.5M610.5 488.5L616.5 482.5M632.5 498.5L638.5 492.5M632.5 492.5L635.5 495.5M641.5 454.5L647.5 454.5L641.5 460.5L647.5 460.5" stroke="#000"/></g></svg>
<script>
(function(){
var cv=document.getElementById('vpc');if(!cv||!cv.getContext)return;var ctx=cv.getContext('2d');if(!ctx)return;
var W=549,H=486,F=5.027339492125848,AS=1.1296296296296295,DIST=679.97;
var M=[-0.961261696, -0.275637356, 0.0, 0.266857656, -0.930643243, -0.250380004, 0.069014082, -0.240680707, 0.96814764];var C=[0.0, 0.0, 0.0, -7.3737, 0.0, 6.7549, 1.2365, 0.0, -14.088, 10.5383, 0.0, 13.7457, -19.6942, 0.0, -3.484, 18.8672, 0.0, -12.0012, -6.3596, 0.0, 23.6549, -12.1938, 0.0, -23.48, 26.5677, 0.0, 9.7035, -27.7308, 0.0, 11.4457, 13.4044, 0.0, -28.6413, 9.9247, 0.0, 31.6465, -29.9709, 0.0, -17.3707, 35.215, 0.0, -7.7399, -21.5211, 0.0, 30.6079, -4.9748, 0.0, -38.409, 30.5843, 0.0, 25.7799, -41.196, 0.0, 1.7007, 30.0753, 0.0, -29.9245, -2.0168, 0.0, 43.5423, -28.6506, 0.0, -34.3387, 45.416, 0.0, 6.1147, -38.5041, 0.0, 26.785, 10.5304, 0.0, -46.7879, 24.3526, 0.0, 42.5083, -47.6331, 0.0, -15.2017, 46.2907, 0.0, -21.3815, -20.0657, 0.0, 47.9309, -17.9035, 0.0, -49.7942, 47.6659, 0.0, 25.0591, -52.9649, 0.0, 13.9544, 30.1185, 0.0, -46.8281, 9.574, 0.0, 55.7525, -45.4131, 0.0, -35.1803, 58.1111, 0.0, -4.8062, -40.1811, 0.0, 43.4221, 0.3016, 0.0, -59.9992, 40.8623, 0.0, 45.0585, -61.3802, 0.0, -5.6984, 49.7512, 0.0, -37.7468, -11.3302, 0.0, 62.2224, -34.0942, 0.0, -54.1995, 62.4997, 0.0, 17.1402, -58.3459, 0.0, 29.9291, 23.0696, 0.0, -62.1916, 25.2813, 0.0, 62.1358, -61.2834, 0.0, -29.0576, 65.5174, 0.0, -20.1858, -35.0424, 0.0, 59.7665, -14.6829, 0.0, -68.4428, 57.6382, 0.0, 40.9614, -70.8679, 0.0, 8.817, 46.7519, 0.0, -54.9023, 2.6372, 0.0, 72.7533, -51.5683, 0.0, -52.3518, 74.0644, 0.0, 3.8038, -57.6999, 0.0, 47.6521, 10.4499, 0.0, -74.7716, 43.1756, 0.0, 62.7365, -74.8512, 0.0, -17.2422, 67.4041, 0.0, -38.1665, -24.1194, 0.0, 74.2849, -32.658, 0.0, -71.6481, 73.0606, 0.0, 31.0184, -75.4169, 0.0, 26.6888, 37.8749, 0.0, -71.1723, 20.3025, 0.0, 78.6626, -68.6201, 0.0, -44.6238, 81.3416, 0.0, -13.5477, -51.2001, 0.0, 65.4106, -6.477, 0.0, -83.4149, 61.5567, 0.0, 57.5393, -84.8485, 0.0, -0.853, 63.5781, 0.0, -57.0774, -8.3824, 0.0, 85.6139, -51.9979, 0.0, -69.2547, 85.6881, 0.0, 16.0485, -74.5099, 0.0, 46.3495, 23.786, 0.0, -85.0543, 40.169, 0.0, 79.2871, -83.7017, 0.0, -31.5281, 83.5334, 0.0, -33.4989, -39.2068, 0.0, 81.6261, -26.3868, 0.0, -87.1994, 78.8296, 0.0, 46.7535, -90.2405, 0.0, 18.8851, 54.0996, 0.0, -75.3209, 11.0505, 0.0, 92.6169, -71.115, 0.0, -61.1772, 94.2939, 0.0, -2.9435, -67.9197, 0.0, 66.2338, 5.3716, 0.0, -95.2426, 60.7051, 0.0, 74.2623, -95.44, 0.0, -13.8279, 80.1428, 0.0, -54.5632, -22.3562, 0.0, 94.8694, -47.848, 0.0, -85.5018, 93.5205, 0.0, 30.8855, -90.2839, 0.0, 40.6055, 39.3435, 0.0, -91.3898, 32.8867, 0.0, 94.4376];var E=[-160.8052, 561.219486, 156.100891];
var L=[-1,1,1];var ln=Math.hypot(L[0],L[1],L[2]);L=[L[0]/ln,L[1]/ln,L[2]/ln];
var img=ctx.createImageData(W,H),d=img.data,zb=new Float64Array(W*H);
for(var i=0;i<W*H;i++){zb[i]=1e30;d[4*i]=255;d[4*i+1]=255;d[4*i+2]=229;d[4*i+3]=255;}
var FR=30,RG=15,R=10,TP=2*Math.PI;
function rp(ph,k,o){var s=R*Math.sin(ph),a=TP*k/FR;o[0]=s*Math.cos(a);o[1]=s*Math.sin(a);o[2]=R*Math.cos(ph);}
var A=[0,0,0],B=[0,0,0],Cc=[0,0,0],D=[0,0,0];
for(var si=0;si<C.length/3;si++){
 var cx=C[3*si],cy=C[3*si+1],cz=C[3*si+2];
 var qx=M[0]*(cx+-20.65)+M[1]*(cy+71.59)+M[2]*(cz+14.15);
 var qy=M[3]*(cx+-20.65)+M[4]*(cy+71.59)+M[5]*(cz+14.15);
 var qz=M[6]*(cx+-20.65)+M[7]*(cy+71.59)+M[8]*(cz+14.15);
 var ez=qy+DIST,sx=((F/AS)*qx/ez+1)/2*W,sy=(1-F*qz/ez)/2*H,sr=(H/2)*F*R/Math.sqrt(ez*ez-R*R)+3;
 var x0=Math.max(0,Math.floor(sx-sr)),x1=Math.min(W-1,Math.ceil(sx+sr)),y0=Math.max(0,Math.floor(sy-sr)),y1=Math.min(H-1,Math.ceil(sy+sr));
 var ox=E[0]-cx,oy=E[1]-cy,oz=E[2]-cz,oo=ox*ox+oy*oy+oz*oz-R*R;
 for(var py=y0;py<=y1;py++){
  var yn=1-(py+0.5)/H*2;
  for(var px=x0;px<=x1;px++){
   var xn=(px+0.5)/W*2-1;
   var a0=xn*AS/F,a1=1,a2=yn/F;
   var dx=M[0]*a0+M[3]*a1+M[6]*a2,dy=M[1]*a0+M[4]*a1+M[7]*a2,dz=M[2]*a0+M[5]*a1+M[8]*a2;
   var dl=Math.sqrt(dx*dx+dy*dy+dz*dz);dx/=dl;dy/=dl;dz/=dl;
   var b=dx*ox+dy*oy+dz*oz,disc=b*b-oo;if(disc<=0)continue;
   var t=-b-Math.sqrt(disc),id=py*W+px;if(t>=zb[id])continue;zb[id]=t;
   var rx=ox+dx*t,ry=oy+dy*t,rz=oz+dz*t;
   var th=Math.atan2(ry,rx);if(th<0)th+=TP;var kf=th/(TP/FR),k=Math.floor(kf),tt=kf-k;k%=FR;
   var ph=Math.acos(Math.max(-1,Math.min(1,rz/R))),sf=ph*RG/Math.PI-0.5,bi=Math.floor(sf),ss=sf-bi;
   var nx,ny,nz;
   if(bi<0){nx=0;ny=0;nz=1;}else if(bi>=RG-1){nx=0;ny=0;nz=-1;}else{
    var p1=Math.PI*(bi+0.5)/RG,p2=Math.PI*(bi+1.5)/RG,k1=(k+1)%FR;
    rp(p1,k,A);rp(p1,k1,B);rp(p2,k,Cc);rp(p2,k1,D);
    var u,v;
    if(tt+ss<1){u=[B[0]-A[0],B[1]-A[1],B[2]-A[2]];v=[Cc[0]-A[0],Cc[1]-A[1],Cc[2]-A[2]];}
    else{u=[D[0]-Cc[0],D[1]-Cc[1],D[2]-Cc[2]];v=[B[0]-Cc[0],B[1]-Cc[1],B[2]-Cc[2]];}
    nx=u[1]*v[2]-u[2]*v[1];ny=u[2]*v[0]-u[0]*v[2];nz=u[0]*v[1]-u[1]*v[0];
    if(nx*rx+ny*ry+nz*rz<0){nx=-nx;ny=-ny;nz=-nz;}
    var nl=Math.sqrt(nx*nx+ny*ny+nz*nz);nx/=nl;ny/=nl;nz/=nl;
   }
   var mx=M[0]*nx+M[1]*ny+M[2]*nz,my=M[3]*nx+M[4]*ny+M[5]*nz,mz=M[6]*nx+M[7]*ny+M[8]*nz;
   var sh=0.2+Math.abs(mx*L[0]+mz*L[1]-my*L[2]);
   var o=4*id;d[o]=Math.min(255,249*sh);d[o+1]=Math.min(255,215*sh);d[o+2]=Math.min(255,44*sh);
  }
 }
}
ctx.putImageData(img,0,0);
})();
</script>
</body></html>
